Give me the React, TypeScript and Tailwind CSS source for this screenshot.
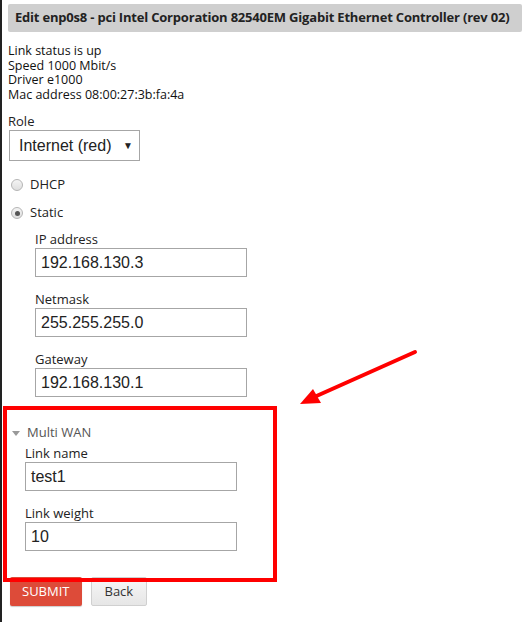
import React from 'react'

const uiFont = "font-['Open_Sans','DejaVu_Sans',sans-serif]"
const inputFont = "font-['Liberation_Sans',Arial,sans-serif]"

function Field({ label, value, className = '' }: { label: string; value: string; className?: string }) {
  return (
    <div className={className}>
      <div className="h-[16px] text-[13px] leading-[16px] text-[#222]">{label}</div>
      <div
        className={`mt-[1px] flex h-[29px] w-[212px] items-center border border-[#a6a6a6] bg-white px-[5px] text-[16px] text-[#222] ${inputFont}`}
      >
        {value}
      </div>
    </div>
  )
}

function Radio({ label, checked }: { label: string; checked?: boolean }) {
  return (
    <div className="flex h-[28px] items-center">
      <span className="ml-[3px] flex h-[12px] w-[12px] items-center justify-center rounded-full border border-[#b5b5b5] bg-gradient-to-b from-[#f4f4f4] to-[#dedede]">
        {checked && <span className="h-[5px] w-[5px] rounded-full bg-[#555]" />}
      </span>
      <span className="ml-[7px] text-[13px] text-[#222]">{label}</span>
    </div>
  )
}

export default function App() {
  return (
    <div className={`relative min-h-[622px] border-l-[2px] border-[#222] bg-white pl-[6px] pr-[2px] pt-[4px] ${uiFont}`}>
      {/* Header */}
      <div className="flex h-[28px] items-center rounded-[2px] bg-[#cfcfcf] px-[7px] text-[13px] font-bold tracking-[-0.2px] text-[#222] whitespace-nowrap">
        Edit enp0s8 - pci Intel Corporation 82540EM Gigabit Ethernet Controller (rev 02)
      </div>

      {/* Link info */}
      <div className="mt-[12px] text-[12.5px] leading-[14.5px] text-[#111]">
        <div>Link status is up</div>
        <div>Speed 1000 Mbit/s</div>
        <div>Driver e1000</div>
        <div>Mac address 08:00:27:3b:fa:4a</div>
      </div>

      {/* Role */}
      <div className="mt-[11px] h-[16px] text-[13px] leading-[16px] text-[#222]">Role</div>
      <div
        className={`ml-[1px] mt-[1px] flex h-[31px] w-[131px] items-center justify-between border border-[#a6a6a6] bg-white pl-[9px] pr-[6px] text-[16px] text-[#222] ${inputFont}`}
      >
        <span>Internet (red)</span>
        <span className="text-[10px]">▼</span>
      </div>

      {/* Mode */}
      <div className="mt-[10px]">
        <Radio label="DHCP" />
        <Radio label="Static" checked />
      </div>

      <div className="pl-[27px]">
        <Field label="IP address" value="192.168.130.3" className="mt-[4px]" />
        <Field label="Netmask" value="255.255.255.0" className="mt-[14px]" />
        <Field label="Gateway" value="192.168.130.1" className="mt-[14px]" />
      </div>

      {/* Multi WAN */}
      <div className="mt-[28px] flex h-[16px] items-center text-[13px] text-[#555]">
        <svg width="8" height="5" viewBox="0 0 8 5" className="ml-[4px]">
          <path d="M0 0 L8 0 L4 5 Z" fill="#999" />
        </svg>
        <span className="ml-[7px]">Multi WAN</span>
      </div>
      <div className="pl-[17px]">
        <Field label="Link name" value="test1" className="mt-[4px]" />
        <Field label="Link weight" value="10" className="mt-[14px]" />
      </div>

      {/* Buttons */}
      <div className="ml-[2px] mt-[26px] flex gap-[9px]">
        <button className="h-[29px] rounded-[2px] bg-[#dd4b39] px-[12px] text-[13px] text-white shadow-[0_1px_1px_rgba(0,0,0,0.2)]">
          SUBMIT
        </button>
        <button className="h-[29px] rounded-[2px] border border-[#d0d0d0] bg-gradient-to-b from-[#f7f7f7] to-[#e6e6e6] px-[13px] text-[13px] text-[#333]">
          Back
        </button>
      </div>

      {/* Annotation overlay */}
      <div className="pointer-events-none absolute left-[1px] top-[406px] h-[176px] w-[274px] border-[4px] border-[#ff0000]" />
      <svg className="pointer-events-none absolute left-0 top-0" width="524" height="622">
        <line x1="413" y1="352" x2="310" y2="398" stroke="#ff0000" strokeWidth="4" strokeLinecap="round" />
        <path d="M298 404 L311 389 L319 403 Z" fill="#ff0000" />
      </svg>
    </div>
  )
}
